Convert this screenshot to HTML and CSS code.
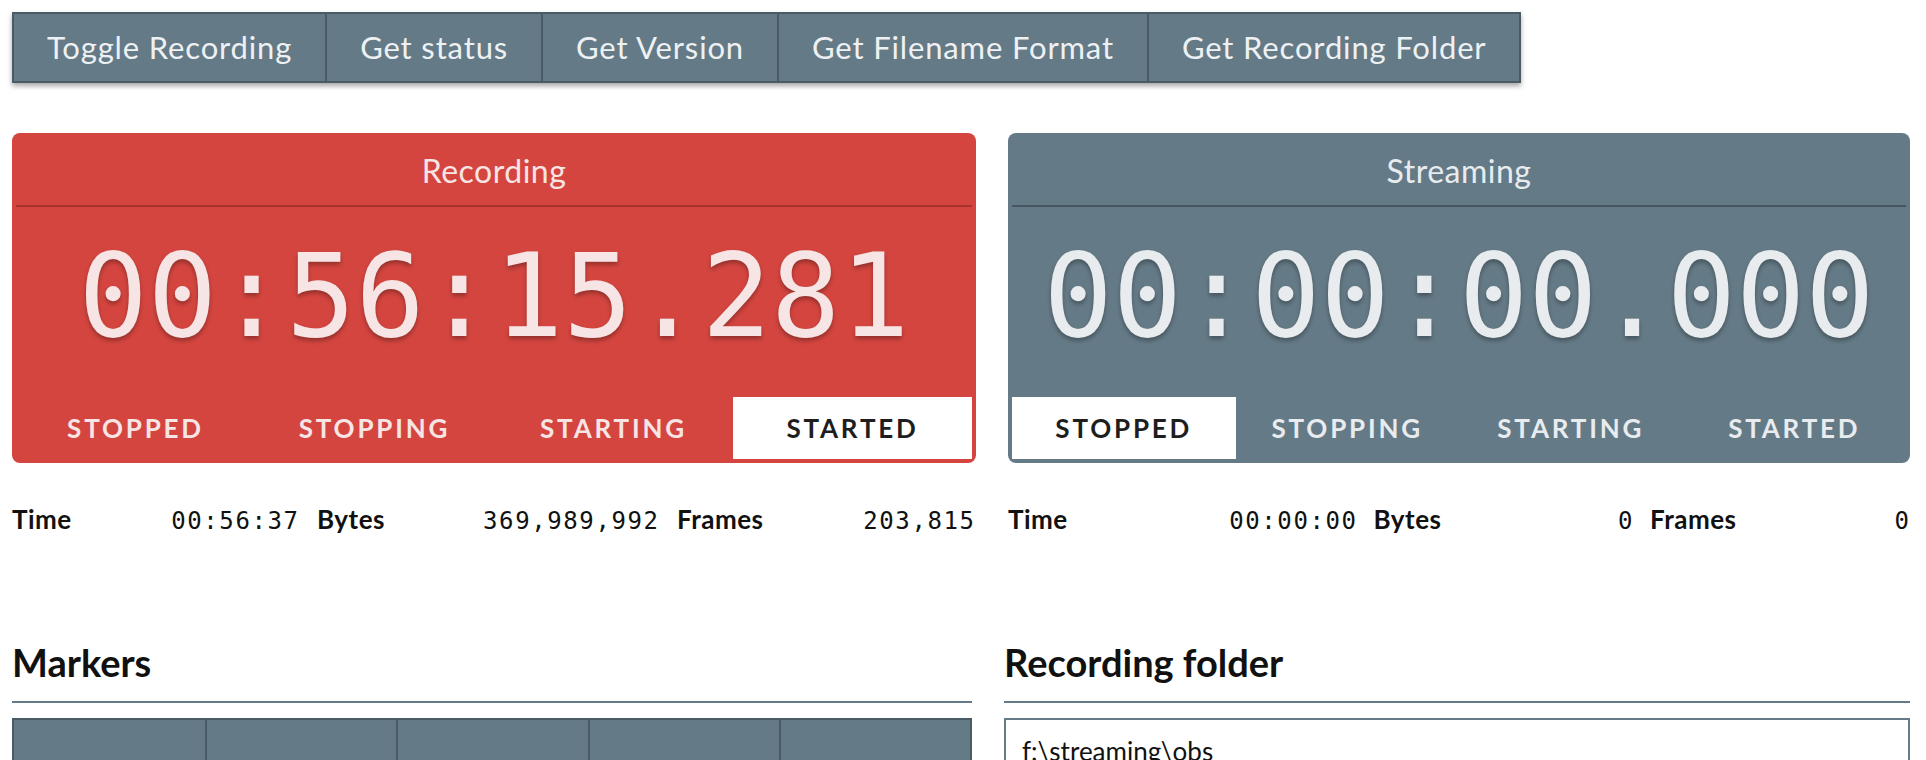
FILE: index.html
```html
<!DOCTYPE html>
<html lang="en">
<head>
<meta charset="utf-8">
<title>OBS Control</title>
<link rel="stylesheet" href="styles.css">
</head>
<body>
<div class="page">
  <div class="toolbar">
    <button class="tool-btn">Toggle Recording</button>
    <button class="tool-btn">Get status</button>
    <button class="tool-btn">Get Version</button>
    <button class="tool-btn">Get Filename Format</button>
    <button class="tool-btn">Get Recording Folder</button>
  </div>

  <div class="panels">
    <section class="panel">
      <div class="card card--rec">
        <div class="card-title">Recording</div>
        <div class="card-time">00:56:15.281</div>
        <div class="states">
          <span class="state">STOPPED</span>
          <span class="state">STOPPING</span>
          <span class="state">STARTING</span>
          <span class="state state--on">STARTED</span>
        </div>
      </div>
      <div class="stats stats--rec">
        <div class="stat"><span class="stat-label">Time</span><span class="stat-value">00:56:37</span></div>
        <div class="stat"><span class="stat-label">Bytes</span><span class="stat-value">369,989,992</span></div>
        <div class="stat"><span class="stat-label">Frames</span><span class="stat-value">203,815</span></div>
      </div>
    </section>

    <section class="panel">
      <div class="card card--stream">
        <div class="card-title">Streaming</div>
        <div class="card-time">00:00:00.000</div>
        <div class="states">
          <span class="state state--on">STOPPED</span>
          <span class="state">STOPPING</span>
          <span class="state">STARTING</span>
          <span class="state">STARTED</span>
        </div>
      </div>
      <div class="stats stats--stream">
        <div class="stat"><span class="stat-label">Time</span><span class="stat-value">00:00:00</span></div>
        <div class="stat"><span class="stat-label">Bytes</span><span class="stat-value">0</span></div>
        <div class="stat"><span class="stat-label">Frames</span><span class="stat-value">0</span></div>
      </div>
    </section>
  </div>

  <div class="lower">
    <section class="block">
      <h2 class="block-title">Markers</h2>
      <div class="markers">
        <div class="marker-cell"></div>
        <div class="marker-cell"></div>
        <div class="marker-cell"></div>
        <div class="marker-cell"></div>
        <div class="marker-cell"></div>
      </div>
    </section>
    <section class="block">
      <h2 class="block-title">Recording folder</h2>
      <div class="folder-box">f:\streaming\obs</div>
    </section>
  </div>
</div>
</body>
</html>
```

FILE: styles.css
```css
html, body {
  margin: 0;
  padding: 0;
  background: #ffffff;
  overflow: hidden;
}

body {
  font-family: Lato, "Noto Sans", "Liberation Sans", sans-serif;
  color: #111111;
}

.page {
  padding: 12px 16px 0 12px;
}

/* Toolbar */
.toolbar {
  display: inline-flex;
  border: 2px solid #4a5b66;
  background: #647a86;
  box-shadow: 0 3px 5px rgba(0, 0, 0, 0.35);
}

.tool-btn {
  font-family: Lato, "Noto Sans", sans-serif;
  font-size: 31px;
  letter-spacing: 0.85px;
  line-height: 37px;
  padding: 15px 33px;
  margin: 0;
  border: none;
  border-left: 2px solid #4a5b66;
  background: #647a86;
  color: #eef1f3;
  cursor: pointer;
}

.tool-btn:first-child {
  border-left: none;
}

/* Panels */
.panels {
  display: grid;
  grid-template-columns: 964px 902px;
  column-gap: 32px;
  margin-top: 50px;
}

.card {
  border-radius: 8px;
  padding: 4px;
}

.card--rec {
  background: #d4453f;
  color: #f7e4e4;
}

.card--stream {
  background: #647a86;
  color: #e8ecef;
}

.card-title {
  font-size: 32px;
  letter-spacing: 0.5px;
  line-height: 68px;
  text-align: center;
  border-bottom: 2px solid #a6322d;
}

.card--stream .card-title {
  border-bottom-color: #46555f;
}

.card-time {
  font-family: "DejaVu Sans Mono", "Liberation Mono", monospace;
  font-size: 115px;
  line-height: 132px;
  text-align: center;
  padding: 23px 0 35px;
  text-shadow: 0 3px 4px rgba(0, 0, 0, 0.3);
}

.states {
  display: grid;
  grid-template-columns: repeat(4, 1fr);
}

.state {
  font-weight: 700;
  font-size: 26px;
  letter-spacing: 2.8px;
  height: 62px;
  display: flex;
  align-items: center;
  justify-content: center;
}

.state--on {
  background: #ffffff;
  color: #1e1e1e;
}

.stats {
  display: grid;
  margin-top: 42px;
}

.stats--rec {
  grid-template-columns: 286px 341px 297px;
  column-gap: 19px;
}

.stats--stream {
  grid-template-columns: 348px 259px 259px;
  column-gap: 17.5px;
}

.stat {
  display: flex;
  justify-content: space-between;
  align-items: baseline;
  line-height: 29px;
}

.stat-label {
  font-weight: 700;
  font-size: 26px;
  letter-spacing: 0.5px;
}

.stat-value {
  font-family: "DejaVu Sans Mono", "Liberation Mono", monospace;
  font-size: 24px;
  letter-spacing: 1.6px;
  margin-right: -1.6px;
}

/* Lower sections */
.lower {
  display: grid;
  grid-template-columns: 960px 906px;
  column-gap: 32px;
  margin-top: 103px;
}

.block-title {
  margin: 0;
  font-size: 38px;
  font-weight: 700;
  line-height: 46px;
  padding-bottom: 16px;
  border-bottom: 2px solid #647a86;
}

.markers {
  margin-top: 15px;
  display: grid;
  grid-template-columns: repeat(5, 1fr);
  border: 2px solid #4a5b66;
  background: #647a86;
}

.marker-cell {
  height: 60px;
  border-left: 2px solid #4a5b66;
}

.marker-cell:first-child {
  border-left: none;
}

.folder-box {
  margin-top: 15px;
  border: 2px solid #647a86;
  padding: 15px 16px 11px;
  font-size: 26px;
  line-height: 32px;
  color: #111111;
}
```
